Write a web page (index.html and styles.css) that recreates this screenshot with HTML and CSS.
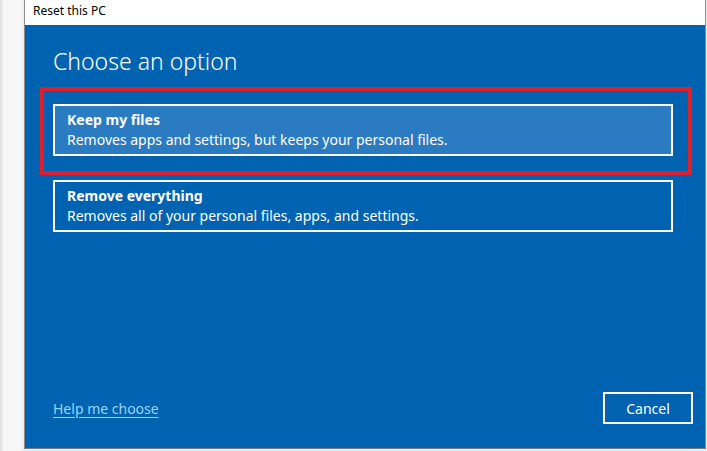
FILE: index.html
```html
<!DOCTYPE html>
<html lang="en">

<head>
    <meta charset="UTF-8">
    <meta name="viewport" content="width=device-width, initial-scale=1.0">
    <title>Reset this PC</title>
    <link rel="stylesheet" href="styles.css">
</head>

<body>
    <div class="window">
        <div class="title-bar">Reset this PC</div>
        <div class="content">
            <h1 class="heading">Choose an option</h1>
            <div class="options">
                <div class="option selected">
                    <div class="option-title">Keep my files</div>
                    <div class="option-desc">Removes apps and settings, but keeps your personal files.</div>
                </div>
                <div class="option">
                    <div class="option-title">Remove everything</div>
                    <div class="option-desc">Removes all of your personal files, apps, and settings.</div>
                </div>
            </div>
            <div class="footer">
                <a href="#" class="help-link">Help me choose</a>
                <button class="cancel-btn">Cancel</button>
            </div>
            <div class="highlight"></div>
        </div>
    </div>
</body>

</html>
```

FILE: styles.css
```css
body {
    margin: 0;
    height: 451px;
    font-family: "Noto Sans", "Open Sans", sans-serif;
    background: linear-gradient(to right, #e4e4e4 0, #e4e4e4 2px, #f7f7f7 3px, #f7f7f7 20px, #ececec 24px);
    overflow: hidden;
}

.window {
    margin-left: 24px;
    width: 680px;
    border-left: 1px solid #8c8c8c;
    border-right: 1px solid #8c8c8c;
    border-bottom: 1px solid #6f7f8f;
}

.title-bar {
    height: 25px;
    background: #fff;
    color: #000;
    font-size: 12px;
    line-height: 21px;
    padding-left: 8px;
}

.content {
    position: relative;
    height: 423px;
    background: #0063b1;
    color: #fff;
    padding: 0 12px 0 28px;
    display: flex;
    flex-direction: column;
}

.heading {
    margin: 20px 0 0;
    font-size: 23px;
    font-weight: 300;
    line-height: 32px;
}

.options {
    margin-top: 27px;
    width: 620px;
    display: flex;
    flex-direction: column;
    gap: 24px;
}

.option {
    height: 48px;
    border: 2px solid #fff;
    padding: 0 12px;
    display: flex;
    flex-direction: column;
    justify-content: center;
}

.option.selected {
    background: #2a7bc1;
}

.option-title {
    font-size: 14px;
    font-weight: bold;
    line-height: 20px;
}

.option-desc {
    font-size: 14px;
    line-height: 20px;
}

.footer {
    margin-top: auto;
    margin-bottom: 24px;
    display: flex;
    justify-content: space-between;
    align-items: center;
}

.help-link {
    color: #99d3ff;
    font-size: 14px;
    text-decoration: underline;
    text-underline-offset: 3px;
}

.cancel-btn {
    width: 90px;
    height: 32px;
    background: transparent;
    border: 2px solid #fff;
    color: #fff;
    font-family: inherit;
    font-size: 14px;
}

.highlight {
    position: absolute;
    left: 15px;
    top: 62px;
    width: 644px;
    height: 80px;
    border: 4px solid #e21e2e;
}
```
